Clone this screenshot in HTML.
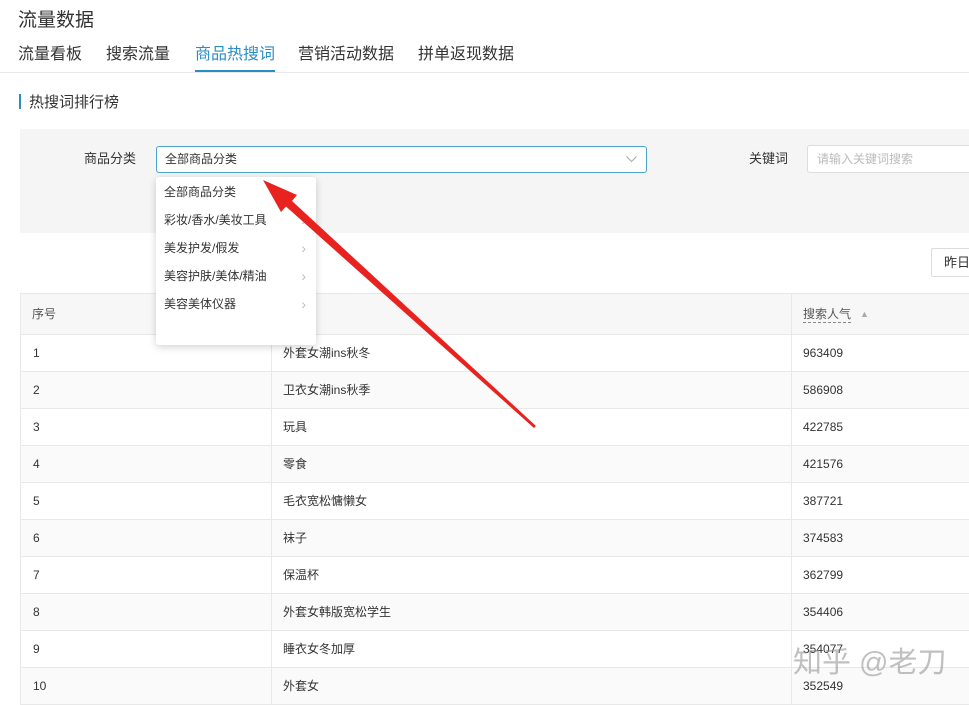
<!DOCTYPE html>
<html><head><meta charset="utf-8"><style>
*{margin:0;padding:0;box-sizing:border-box}
body{width:969px;height:705px;overflow:hidden;background:#fff;font-family:"Liberation Sans","Noto Sans CJK SC",sans-serif;color:#333;position:relative}
.a{position:absolute;white-space:nowrap}
.tab{font-size:16px;color:#333;top:43px;line-height:24px}
.row{position:absolute;left:20px;width:960px;height:37px;border-bottom:1px solid #e8e8e8;font-size:12px;line-height:36px}
.row span{position:absolute;top:0}
.menu div{height:28px;line-height:28px;padding-left:8px;font-size:12px;color:#333;position:relative}
.chev{position:absolute;right:10px;top:0;color:#bbb;font-size:14px}
</style></head><body>
<div class="a" style="left:18px;top:8px;font-size:19px;line-height:26px;color:#333">流量数据</div>
<div class="a tab" style="left:18px">流量看板</div>
<div class="a tab" style="left:106px">搜索流量</div>
<div class="a tab" style="left:195px;color:#2a8dc5">商品热搜词</div>
<div class="a tab" style="left:298px">营销活动数据</div>
<div class="a tab" style="left:418px">拼单返现数据</div>
<div class="a" style="left:0;top:72px;width:969px;height:1px;background:#e8e8e8"></div>
<div class="a" style="left:195px;top:70px;width:80px;height:2px;background:#2a8dc5"></div>
<div class="a" style="left:19px;top:94px;width:2px;height:15px;background:#2a8dc5"></div>
<div class="a" style="left:29px;top:92px;font-size:15px;line-height:22px">热搜词排行榜</div>
<div class="a" style="left:20px;top:129px;width:949px;height:104px;background:#f5f5f6"></div>
<div class="a" style="left:84px;top:150px;font-size:13px;line-height:18px">商品分类</div>
<div class="a" style="left:156px;top:146px;width:491px;height:27px;background:#fff;border:1px solid #4da3c9;border-radius:3px;font-size:12px;line-height:25px;padding-left:8px">全部商品分类<svg style="position:absolute;right:9px;top:9px" width="11" height="7"><path d="M0.5 0.5L5.5 5.5L10.5 0.5" fill="none" stroke="#aaa" stroke-width="1"/></svg></div>
<div class="a" style="left:749px;top:150px;font-size:13px;line-height:18px">关键词</div>
<div class="a" style="left:807px;top:145px;width:170px;height:28px;background:#fff;border:1px solid #ddd;border-radius:3px;font-size:12px;line-height:26px;padding-left:9px;color:#bbb">请输入关键词搜索</div>
<div class="a" style="left:931px;top:248px;width:50px;height:29px;border:1px solid #ddd;border-radius:2px;font-size:13px;line-height:27px;padding-left:12px">昨日</div>
<div class="a" style="left:20px;top:293px;width:960px;height:42px;background:#f7f7f7;border-top:1px solid #e8e8e8;border-bottom:1px solid #e8e8e8;font-size:12px;color:#555;line-height:40px">
<span style="position:absolute;left:12px;top:0">序号</span>
<span style="position:absolute;left:263px;top:0">商品</span>
<span style="position:absolute;left:783px;top:12px;line-height:16px;border-bottom:1px dashed #888">搜索人气</span><span style="position:absolute;left:840px;top:0;color:#aaa;font-size:9px">&#9650;</span>
</div>
<div class="rows">
<div class="row" style="top:335px"><span style="left:13px">1</span><span style="left:263px">外套女潮ins秋冬</span><span style="left:783px">963409</span></div>
<div class="row" style="top:372px;background:#fafafa"><span style="left:13px">2</span><span style="left:263px">卫衣女潮ins秋季</span><span style="left:783px">586908</span></div>
<div class="row" style="top:409px"><span style="left:13px">3</span><span style="left:263px">玩具</span><span style="left:783px">422785</span></div>
<div class="row" style="top:446px;background:#fafafa"><span style="left:13px">4</span><span style="left:263px">零食</span><span style="left:783px">421576</span></div>
<div class="row" style="top:483px"><span style="left:13px">5</span><span style="left:263px">毛衣宽松慵懒女</span><span style="left:783px">387721</span></div>
<div class="row" style="top:520px;background:#fafafa"><span style="left:13px">6</span><span style="left:263px">袜子</span><span style="left:783px">374583</span></div>
<div class="row" style="top:557px"><span style="left:13px">7</span><span style="left:263px">保温杯</span><span style="left:783px">362799</span></div>
<div class="row" style="top:594px;background:#fafafa"><span style="left:13px">8</span><span style="left:263px">外套女韩版宽松学生</span><span style="left:783px">354406</span></div>
<div class="row" style="top:631px"><span style="left:13px">9</span><span style="left:263px">睡衣女冬加厚</span><span style="left:783px">354077</span></div>
<div class="row" style="top:668px;background:#fafafa"><span style="left:13px">10</span><span style="left:263px">外套女</span><span style="left:783px">352549</span></div>
</div>
<div class="a" style="left:20px;top:293px;width:1px;height:412px;background:#e8e8e8"></div>
<div class="a" style="left:271px;top:293px;width:1px;height:412px;background:#e8e8e8"></div>
<div class="a" style="left:791px;top:293px;width:1px;height:412px;background:#e8e8e8"></div>
<div class="a menu" style="left:156px;top:177px;width:160px;height:168px;background:#fff;border-radius:3px;box-shadow:0 2px 8px rgba(0,0,0,.18);padding-top:1px">
<div>全部商品分类</div>
<div>彩妆/香水/美妆工具<span class="chev">&#8250;</span></div>
<div>美发护发/假发<span class="chev">&#8250;</span></div>
<div>美容护肤/美体/精油<span class="chev">&#8250;</span></div>
<div>美容美体仪器<span class="chev">&#8250;</span></div>
</div>
<svg class="a" style="left:0;top:0" width="969" height="705"><polygon points="263,180 297,195 292,201 536,426 534,428 286,206.5 281,212" fill="#e8231f"/></svg>
<div class="a" style="left:793px;top:645px;font-size:29px;line-height:36px;color:rgba(140,140,140,.55)">知乎 @老刀</div>
</body></html>
